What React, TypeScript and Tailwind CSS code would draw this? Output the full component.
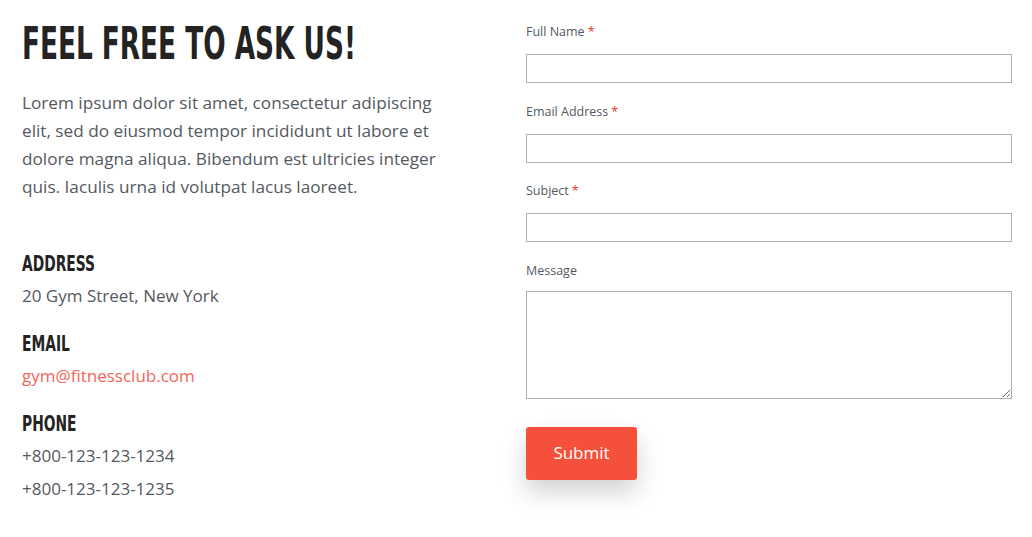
import React from "react";

const body = { fontFamily: "'Open Sans', Lato, sans-serif" };
const head = { fontFamily: "'DejaVu Sans Condensed', 'DejaVu Sans', sans-serif" };

const Field = ({ label, required }: { label: string; required?: boolean }) => (
  <div className="mb-[18.5px]">
    <label className="block text-[12.5px] leading-[20px] text-[#54595f] mb-[12px]">
      {label}
      {required && <span className="text-[#e2401c] ml-[3px]">*</span>}
    </label>
    <input type="text" className="block w-full h-[29px] border border-[#a9b0b8] bg-white outline-none px-2" />
  </div>
);

const InfoBlock = ({ title, children }: { title: string; children: React.ReactNode }) => (
  <div className="mb-[18px]">
    <h4
      style={head}
      className="text-[20.5px] font-bold leading-[28px] text-[#232323] scale-x-[0.75] origin-left whitespace-nowrap"
    >
      {title}
    </h4>
    <div className="mt-[1px]">{children}</div>
  </div>
);

const App = () => {
  return (
    <div style={body} className="w-[1032px] h-[537px] bg-white flex gap-[44px] pl-[22px] pr-[20px] overflow-hidden">
      <div className="w-[460px] shrink-0 pt-[18px]">
        <h2
          style={head}
          className="text-[45px] font-bold leading-[52px] text-[#232323] uppercase scale-x-[0.65] origin-left whitespace-nowrap"
        >
          Feel free to ask us!
        </h2>
        <p className="mt-[19px] w-[440px] text-[17.2px] leading-[28px] text-[#54595f]">
          Lorem ipsum dolor sit amet, consectetur adipiscing elit, sed do eiusmod tempor incididunt ut labore et
          dolore magna aliqua. Bibendum est ultricies integer quis. Iaculis urna id volutpat lacus laoreet.
        </p>
        <div className="mt-[49px] text-[17px] leading-[33px] text-[#54595f]">
          <InfoBlock title="ADDRESS">
            <p>20 Gym Street, New York</p>
          </InfoBlock>
          <InfoBlock title="EMAIL">
            <p className="text-[#f2665a]">gym@fitnessclub.com</p>
          </InfoBlock>
          <InfoBlock title="PHONE">
            <p>+800-123-123-1234</p>
            <p>+800-123-123-1235</p>
          </InfoBlock>
        </div>
      </div>

      <div className="w-[486px] shrink-0 pt-[22px]">
        <Field label="Full Name" required />
        <Field label="Email Address" required />
        <Field label="Subject" required />
        <div>
          <label className="block text-[12.5px] leading-[20px] text-[#54595f] mb-[10px]">Message</label>
          <textarea className="block w-full h-[108px] border border-[#a9b0b8] bg-white outline-none p-2" />
        </div>
        <button className="mt-[28px] w-[111px] h-[53px] rounded-[3px] bg-[#f4503b] text-white text-[17px] shadow-[0_12px_24px_rgba(0,0,0,0.18)]">
          Submit
        </button>
      </div>
    </div>
  );
};

export default App;
